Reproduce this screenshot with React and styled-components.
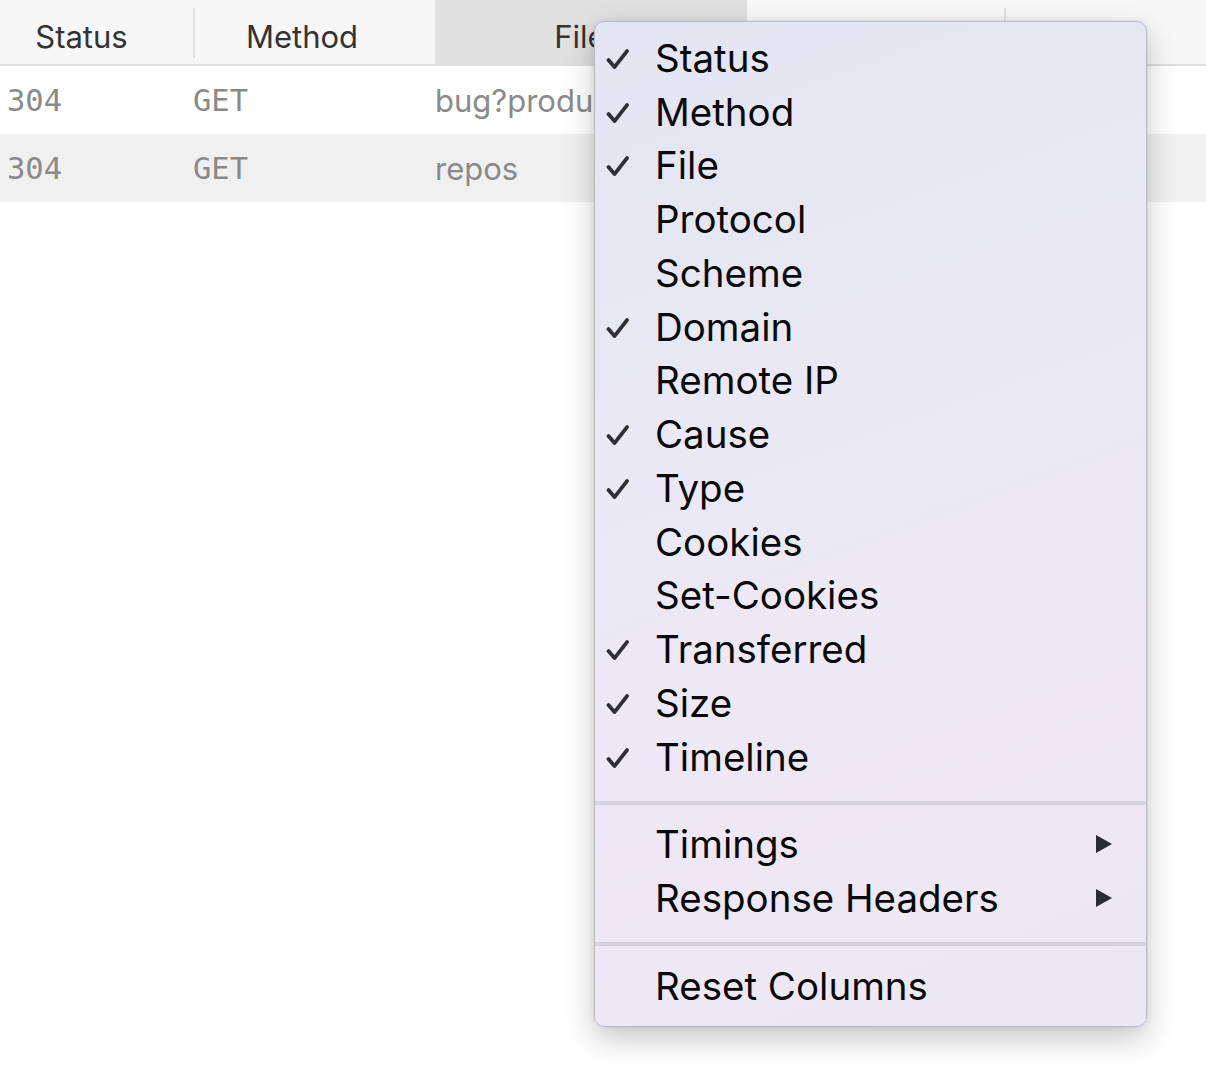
import React from "react";
import styled, { createGlobalStyle } from "styled-components";

const Global = createGlobalStyle`
  html, body { margin: 0; padding: 0; background: #ffffff; }
  body { width: 1206px; height: 1068px; overflow: hidden; font-family: Inter, "Open Sans", sans-serif; }
`;

const Page = styled.div`
  position: relative;
  width: 1206px;
  height: 1068px;
  background: #fff;
`;

const Header = styled.div`
  display: grid;
  grid-template-columns: 193px 242px 312px 257px 1fr;
  height: 64px;
  background: #f7f7f7;
  border-bottom: 2px solid #dedede;
`;

const HeadCell = styled.div`
  display: flex;
  align-items: center;
  justify-content: center;
  padding-right: ${(p) => p.$pr || 0}px;
  padding-top: 8px;
  box-sizing: border-box;
  font-family: Inter, "Open Sans", sans-serif;
  font-size: 31px;
  color: #333;
  background: ${(p) => (p.$active ? "#e0e0e0" : "transparent")};
  position: relative;
  &::before {
    content: "";
    display: ${(p) => (p.$sep ? "block" : "none")};
    position: absolute;
    left: 0;
    top: 8px;
    height: 50px;
    width: 2px;
    background: #e0e0e0;
  }
`;

const Row = styled.div`
  display: grid;
  grid-template-columns: 193px 242px 1fr;
  height: 68px;
  align-items: center;
  background: ${(p) => (p.$alt ? "#f0f0f0" : "#ffffff")};
`;

const Cell = styled.div`
  font-family: ${(p) => (p.$mono ? '"DejaVu Sans Mono", monospace' : 'Inter, "Open Sans", sans-serif')};
  font-size: ${(p) => (p.$mono ? 30.5 : 31)}px;
  color: #8a8a8a;
  padding-left: ${(p) => p.$pl || 0}px;
  white-space: nowrap;
  overflow: hidden;
`;

const Menu = styled.div`
  position: absolute;
  left: 594px;
  top: 21px;
  width: 553px;
  box-sizing: border-box;
  padding: 9px 0 13px;
  border: 1px solid #b9b9c2;
  border-radius: 10px;
  background: linear-gradient(160deg, #e3e5f2 0%, #ebe9f5 45%, #eee8f5 70%, #ebe8f3 100%);
  box-shadow: 0 12px 30px rgba(0, 0, 0, 0.22), 0 0 6px rgba(0, 0, 0, 0.08);
`;

const Item = styled.div`
  position: relative;
  display: flex;
  align-items: center;
  height: 53.75px;
  padding-left: 60px;
  padding-right: 33px;
  font-family: Inter, "Open Sans", sans-serif;
  font-size: 38.5px;
  color: #0a0a0a;
`;

const Label = styled.span`
  flex: 1;
`;

const Check = styled.svg`
  position: absolute;
  left: 11px;
  top: 50%;
  transform: translateY(-45%);
`;

const Separator = styled.div`
  height: 4px;
  margin: 17px 0 13px;
  background: #d6d4df;
`;

const CheckIcon = () => (
  <Check width="24" height="22" viewBox="0 0 24 22">
    <path d="M2.5 12 L8.5 19 L21 3" fill="none" stroke="#2f2f35" strokeWidth="3.8" strokeLinecap="round" strokeLinejoin="round" />
  </Check>
);

const Arrow = () => (
  <svg width="18" height="20" viewBox="0 0 18 20">
    <path d="M1 1 L17 10 L1 19 Z" fill="#2a2a33" />
  </svg>
);

const columns = [
  ["Status", true],
  ["Method", true],
  ["File", true],
  ["Protocol", false],
  ["Scheme", false],
  ["Domain", true],
  ["Remote IP", false],
  ["Cause", true],
  ["Type", true],
  ["Cookies", false],
  ["Set-Cookies", false],
  ["Transferred", true],
  ["Size", true],
  ["Timeline", true],
];

export default function App() {
  return (
    <Page>
      <Global />
      <Header>
        <HeadCell $pr={30}>Status</HeadCell>
        <HeadCell $sep $pr={24}>Method</HeadCell>
        <HeadCell $active $pr={22}>File</HeadCell>
        <HeadCell />
        <HeadCell $sep />
      </Header>
      <Row>
        <Cell $mono $pl={7}>304</Cell>
        <Cell $mono>GET</Cell>
        <Cell>bug?product=Firefox</Cell>
      </Row>
      <Row $alt>
        <Cell $mono $pl={7}>304</Cell>
        <Cell $mono>GET</Cell>
        <Cell>repos</Cell>
      </Row>
      <Menu>
        {columns.map(([name, on]) => (
          <Item key={name}>
            {on && <CheckIcon />}
            <Label>{name}</Label>
          </Item>
        ))}
        <Separator />
        <Item>
          <Label>Timings</Label>
          <Arrow />
        </Item>
        <Item>
          <Label>Response Headers</Label>
          <Arrow />
        </Item>
        <Separator />
        <Item>
          <Label>Reset Columns</Label>
        </Item>
      </Menu>
    </Page>
  );
}
